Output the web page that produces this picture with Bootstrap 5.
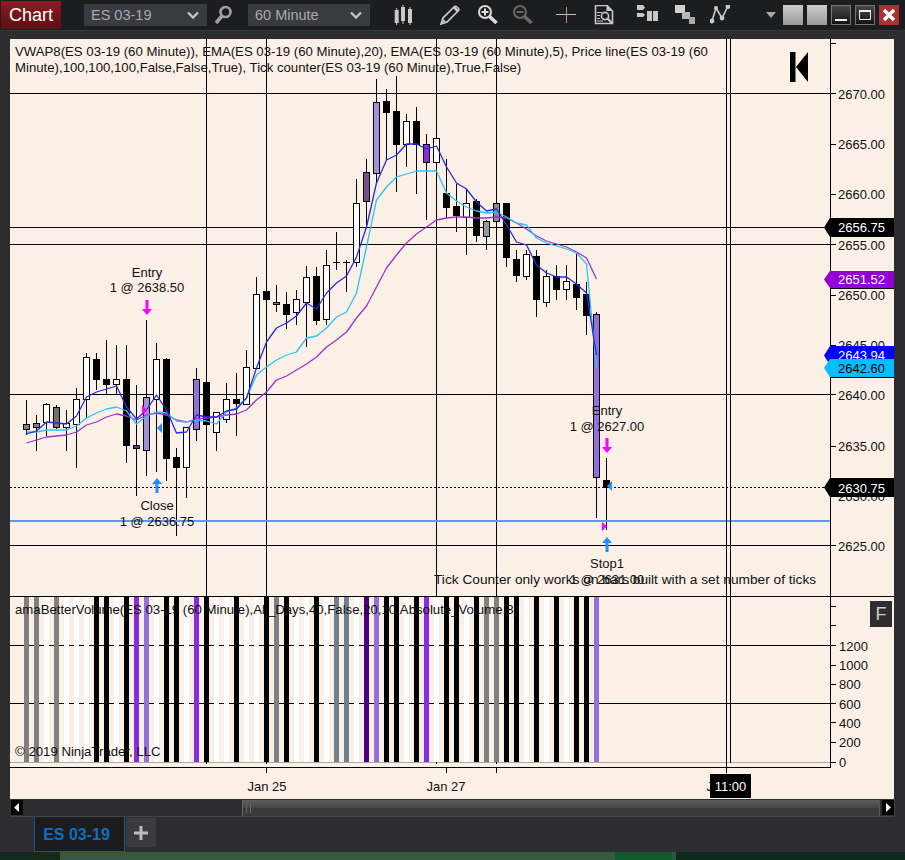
<!DOCTYPE html>
<html lang="en">
<head>
<meta charset="utf-8">
<title>Chart</title>
<link href="https://cdn.jsdelivr.net/npm/bootstrap@5.3.0/dist/css/bootstrap.min.css" rel="stylesheet">
<style>
html,body{margin:0;height:860px;overflow:hidden;background:#2d2d30;font-family:"Liberation Sans",Arial,sans-serif}
.win{width:905px;height:860px}
.tbar{height:30px;background:#1c1d1f;flex:none}
.tbar svg{display:block;flex:none}
.chart-btn{width:60px;height:28px;margin-left:1px;padding:0;border:0;border-radius:0;color:#fff;font-size:18px;line-height:28px;background:linear-gradient(#8e1c22,#5c1014);text-align:center}
.chart-btn:hover{color:#fff;background:linear-gradient(#8e1c22,#5c1014)}
.sel{height:22px;padding:0 8px 0 7px;border:0;border-radius:0;background:#3a3b42;color:#a9a9ad;font-size:14.5px;line-height:22px}
.sel:hover{background:#3a3b42;color:#a9a9ad}
.sel1{width:123px}.sel2{width:122px}
.s4{margin-left:4px}.s6{margin-left:6px}.s14{margin-left:14px}.s15{margin-left:15px}.s16{margin-left:16px}.s18{margin-left:18px}.s22{margin-left:22px}.s23{margin-left:23px}.s24{margin-left:24px}.s26{margin-left:26px}.s35{margin-left:35px}
.band{height:9px;flex:none;background:#2d2d30;border-top:1px solid #37373a}
.plot-wrap{padding-left:10px;height:760px;flex:none}
#chart{display:block;width:884px;height:760px;background:#faf0e6}
#chart text{font-family:"Liberation Sans",Arial,sans-serif;font-size:13px;fill:#111}
#chart .lg{font-size:13.2px}
#chart .tk{font-size:13.7px}
.sbar{height:18px;flex:none;margin-left:10px;width:885px;background:#2e2e30;border-bottom:1px solid #444;border-right:1px solid #444;padding:1px 1px 0}
.sb-arrow{width:12px;height:15px;background:#000;flex:none}
.sb-gap{width:219px;flex:none}
.sb-thumb{width:638px;height:16px;flex:none;margin-right:2px;border-left:1px solid #666;border-right:1px solid #555;background:linear-gradient(#5d5d5d,#454545 50%,#3a3a3a 50%,#3a3a3a)}
.tabs{height:35px;flex:none;padding-left:34px}
.tab-on{width:91px;height:35px;padding:0 6px 0 0;border:1px solid #0b5a97;border-top:0;border-radius:0;background:#1c1c1e;color:#0f6fbd;font-weight:700;font-size:16px;line-height:33px}
.tab-on:hover{background:#1c1c1e;color:#0f6fbd}
.tab-add{width:30px;height:29px;margin-left:1px;margin-top:1px;background:#3a3a40}
.foot{height:8px;flex:none}
.g1{width:60px;background:#13291d}.g2{width:555px;background:#38573f}.g3{width:57px;background:#11592e}.g4{width:4px;background:#2a5a3c}.g5{flex:1;background:#0e2a1d}
</style>
</head>
<body>
<div class="win d-flex flex-column">
  <div class="tbar d-flex align-items-center">
    <button class="btn chart-btn" type="button">Chart</button>
    <button class="btn sel sel1 s23 d-flex justify-content-between align-items-center" type="button"><span>ES 03-19</span><svg width="12" height="8" viewBox="0 0 12 8"><path d="M1 1.5 6 6.5 11 1.5" fill="none" stroke="#c4c4c4" stroke-width="2.4"/></svg></button>
    <svg class="s6" width="20" height="20" viewBox="0 0 20 20"><circle cx="12.5" cy="7" r="5" fill="none" stroke="#a0a0a0" stroke-width="2.6"/><path d="M9 11 3 18" stroke="#a0a0a0" stroke-width="3.6"/></svg>
    <button class="btn sel sel2 s15 d-flex justify-content-between align-items-center" type="button"><span>60 Minute</span><svg width="12" height="8" viewBox="0 0 12 8"><path d="M1 1.5 6 6.5 11 1.5" fill="none" stroke="#c4c4c4" stroke-width="2.4"/></svg></button>
    <svg class="s24" width="20" height="20" viewBox="0 0 20 20"><g fill="#c8c8c8"><rect x="0.7" y="5" width="4" height="13"/><rect x="2.2" y="3" width="1" height="17"/><rect x="7" y="2" width="4" height="14"/><rect x="8.5" y="-1" width="1" height="20"/><rect x="14" y="4" width="4" height="14"/><rect x="15.5" y="2" width="1" height="18"/></g></svg>
    <svg class="s26" width="20" height="20" viewBox="0 0 20 20"><path d="M1 19 3 13 14 2Q15.5.8 17 2L18.4 3.4Q19.4 5 18 6L7 17Z" fill="#1c1d1f" stroke="#d2d2d2" stroke-width="1.6"/><path d="M13 3 17 7 18.5 5.5 15 1.5Z" fill="#d2d2d2"/><path d="M1 19 3 13.5 6.5 17Z" fill="#9fb6cf"/></svg>
    <svg class="s18" width="20" height="20" viewBox="0 0 20 20"><circle cx="7" cy="7" r="6" fill="none" stroke="#dcdcdc" stroke-width="2"/><path d="M7 3.5v7M3.5 7h7" stroke="#dcdcdc" stroke-width="2"/><path d="M11.5 11.5 18.5 18" stroke="#dcdcdc" stroke-width="3.6"/></svg>
    <svg class="s15" width="20" height="20" viewBox="0 0 20 20"><circle cx="7" cy="7" r="6" fill="none" stroke="#686868" stroke-width="2"/><path d="M3.5 7h7" stroke="#686868" stroke-width="2"/><path d="M11.5 11.5 18.5 18" stroke="#686868" stroke-width="3.6"/></svg>
    <svg class="s23" width="20" height="20" viewBox="0 0 20 20"><path d="M0 9.5h20" stroke="#c4c4c4"/><path d="M10.5 2v16" stroke="#c09060"/></svg>
    <svg class="s18" width="20" height="20" viewBox="0 0 20 20"><path d="M1.5.5H13L18.5 6V18.5H1.5Z" fill="none" stroke="#c8c8c8" stroke-width="1.6"/><path d="M12.5.5V6H18.5Z" fill="#c8c8c8"/><path d="M3 7.5h5M3 10.5h3M3 13.5h3M3 16h6" stroke="#c8c8c8"/><circle cx="11" cy="11" r="3.6" fill="#1c1d1f" stroke="#c8c8c8" stroke-width="1.6"/><path d="M13.5 13.5 18.5 18.5" stroke="#c8c8c8" stroke-width="2.2"/></svg>
    <svg class="s22" width="22" height="20" viewBox="0 0 22 20"><g fill="#c8c8c8"><path d="M1 0H7L9 2.5 7 5H1Z"/><path d="M1 8H7L9 10 7 12H1Z"/><rect x="11" y="6" width="5" height="10"/><rect x="17" y="6" width="5" height="10"/></g></svg>
    <svg class="s16" width="22" height="20" viewBox="0 0 22 20"><rect x="1" y="-1" width="10" height="9" fill="#d0d0d0"/><rect x="8" y="7" width="8" height="7" fill="#b8b8b8"/><rect x="15" y="12" width="6" height="7" fill="#a8a8a8"/></svg>
    <svg class="s14" width="20" height="20" viewBox="0 0 20 20"><path d="M2 16 6 3 12 13 18 1" fill="none" stroke="#c8c8c8" stroke-width="1.6"/><g fill="#c8c8c8"><circle cx="2" cy="16" r="2.4"/><circle cx="6" cy="3" r="2"/><circle cx="12" cy="13" r="2.4"/><circle cx="18" cy="1.5" r="2.4"/></g></svg>
    <svg class="s35" width="12" height="6" viewBox="0 0 12 6"><path d="M1 0H11L6 6Z" fill="#a8a8a8"/></svg>
    <svg class="s6" width="20" height="20" viewBox="0 0 20 20"><defs><linearGradient id="gg" x1="0" y1="0" x2="0" y2="1"><stop offset="0" stop-color="#cbcbcb"/><stop offset="1" stop-color="#999"/></linearGradient><linearGradient id="gd" x1="0" y1="0" x2="0" y2="1"><stop offset="0" stop-color="#4a4a4a"/><stop offset="1" stop-color="#111"/></linearGradient></defs><rect width="20" height="20" fill="url(#gg)"/></svg>
    <svg class="s4" width="20" height="20" viewBox="0 0 20 20"><rect width="20" height="20" fill="url(#gg)"/></svg>
    <svg class="s4" width="20" height="20" viewBox="0 0 20 20"><rect x=".5" y=".5" width="19" height="19" fill="url(#gd)" stroke="#777"/><rect x="4" y="14" width="12" height="2" fill="#eee"/></svg>
    <svg class="s4" width="20" height="20" viewBox="0 0 20 20"><rect x=".5" y=".5" width="19" height="19" fill="url(#gd)" stroke="#777"/><path d="M4.5 6.5h11v8h-11z" fill="none" stroke="#eee"/><rect x="4" y="5" width="12" height="2" fill="#eee"/></svg>
    <svg class="s4" width="20" height="20" viewBox="0 0 20 20"><rect width="20" height="20" fill="#ab3232"/><path d="M5 5 15 15M15 5 5 15" stroke="#fff" stroke-width="3.4"/></svg>
  </div>
  <div class="band"></div>
  <div class="plot-wrap"><svg id="chart" viewBox="10 39 884 760" shape-rendering="crispEdges"></svg></div>
  <div class="sbar d-flex">
    <div class="sb-arrow d-flex align-items-center justify-content-center"><svg width="6" height="9" viewBox="0 0 6 9"><path d="M5 0V9L0 4.5Z" fill="#fff"/></svg></div>
    <div class="sb-gap"></div>
    <div class="sb-thumb d-flex align-items-center"><svg width="10" height="10" viewBox="0 0 10 10"><path d="M3.5 0v10M7.5 0v10" stroke="#666"/></svg></div>
    <div class="sb-arrow d-flex align-items-center justify-content-center"><svg width="6" height="9" viewBox="0 0 6 9"><path d="M1 0V9L6 4.5Z" fill="#fff"/></svg></div>
  </div>
  <div class="tabs d-flex align-items-start">
    <button class="btn tab-on" type="button">ES 03-19</button>
    <div class="tab-add d-flex align-items-center justify-content-center"><svg width="14" height="14" viewBox="0 0 14 14"><path d="M7 0v14M0 7h14" stroke="#bdbdbd" stroke-width="3"/></svg></div>
  </div>
  <div class="foot d-flex"><div class="g1"></div><div class="g2"></div><div class="g3"></div><div class="g4"></div><div class="g5"></div></div>
</div>
<script>
var W='#fff',K='#000',G='#808080',G2='#707070',G3='#999',L='#a291d6',P='#9370db',V='#8a2be2',D='#74508f';
var C=[
[400,435,424,429,G],[415,451,423,427,G],[403,436,404,422,W],[405,429,407,427,G2],[410,451,423,427,W],
[388,468,399,424,W],[353,418,357,399,W],[353,390,359,379,K],[340,394,379,384,K],[345,394,379,384,W],
[345,463,379,445,K],[385,496,445,448,'#6a2fa0'],[320,476,397,450,L],[343,472,359,399,W],[358,481,359,458,K],
[448,536,457,467,K],[427,498,427,467,W],[368,441,379,429,P],[382,461,382,424,K],[412,451,412,432,W],
[383,423,399,419,W],[373,436,399,403,K],[350,404,367,404,W],[277,368,294,368,W],[291,299,291,299,K],
[285,312,302,304,G],[292,329,304,314,K],[290,325,299,312,W],[266,347,277,302,W],[267,325,276,320,K],
[250,325,265,319,W],[232,270,262,262,K],[260,292,262,262,K],[179,267,203,262,W],[159,227,172,201,D],
[79,183,102,173,L],[89,160,101,112,K],[76,192,111,144,K],[114,167,121,144,W],[107,194,121,144,K],
[134,220,144,162,V],[136,220,138,162,W],[159,218,193,207,K],[184,232,206,215,K],[189,255,203,217,W],
[199,242,201,235,K],[220,250,221,236,G3],[203,221,203,221,'#8a8a8a'],[203,267,203,257,K],[250,282,259,275,K],
[250,280,254,276,W],[250,317,256,299,K],[270,307,276,302,W],[265,300,276,289,K],[265,300,281,289,W],
[253,310,284,297,K],[282,335,294,315,K],[312,518,314,477,P],[458,530,480,487,K]];
var volC=[G,G,W,G,W,W,W,K,K,W,K,V,P,W,K,K,W,V,K,W,W,K,W,W,K,G,K,W,W,K,W,'#708090','#708090',W,'#4b0082',P,K,K,W,K,V,W,K,K,W,K,G,G,K,K,W,K,W,K,W,K,K,P];
var blue=[434,431,422,423,424,416,397,392,389,386,407,419,410,395,410,433,432,415,417,417,411,409,398,368,342,328,323,316,303,309,293,283,276,257,227,183,160,155,144,144,149,146,167,183,189,202,211,209,225,242,245,265,273,277,277,284,293,355];
var cyan=[432,432,430,430,430,426,418,413,409,407,411,424,416,412,413,421,422,420,421,424,412,408,398,375,367,360,355,352,338,336,328,317,312,293,247,200,187,177,174,171,171,171,193,201,207,211,213,212,217,223,225,238,243,246,249,253,264,368];
var purp=[443,440,437,436,435,432,425,422,417,414,416,420,415,413,415,420,422,419,418,417,415,414,410,400,392,380,376,370,364,357,347,340,332,318,306,287,268,255,243,234,227,220,218,217,217,218,218,217,218,223,229,236,241,244,247,252,258,279];
var s='';
function X(i){return 26.5+10*i}
function line(a,b,c,d,col,w,extra){return '<line x1="'+a+'" y1="'+b+'" x2="'+c+'" y2="'+d+'" stroke="'+col+'" stroke-width="'+(w||1)+'" '+(extra||'')+'/>'}
function text(x,y,t,o){return '<text x="'+x+'" y="'+y+'" '+(o||'')+'>'+t+'</text>'}
function poly(a,col,w){var p=a.map(function(y,i){return X(i)+','+y}).join(' ');return '<polyline points="'+p+'" fill="none" stroke="'+col+'" stroke-width="'+w+'" stroke-linejoin="round" shape-rendering="geometricPrecision"/>'}
function tag(y1,y2,f,tx,ty,tc,b){var m=(y1+y2)/2;return '<polygon points="824,'+m+' 830,'+y1+' 894,'+y1+' 894,'+y2+' 830,'+y2+'" fill="'+f+'" shape-rendering="geometricPrecision"/>'+(b?line(830,y2+.5,894,y2+.5,'#000'):'')+text(838,ty,tx,'style="fill:'+tc+'"')}
function arrow(x,y,dir,col){
  var d=dir>0?'M'+(x-1.5)+' '+y+'h3v9h3.5l-5 6-5-6h3.5z':'M'+(x-1.5)+' '+(y+15)+'h3v-9h3.5l-5-6-5 6h3.5z';
  return '<path d="'+d+'" fill="'+col+'" shape-rendering="geometricPrecision"/>'}
[93.5,244.5,394.5,545.5].forEach(function(y){s+=line(10,y,830,y,'#000')});
s+=line(10,227.5,824,227.5,'#000');
[206.5,266.5,436.5,496.5].forEach(function(x){s+=line(x,39,x,596,'#000')});
C.forEach(function(c,i){var x=X(i);
  s+=line(x,c[0],x,c[1],'#000');
  if(c[2]===c[3]&&c[2]===262){s+=line(x-3.5,262.5,x+3.5,262.5,'#000')}
  else s+='<rect x="'+(x-3)+'" y="'+(c[2]+.5)+'" width="6" height="'+(c[3]-c[2])+'" fill="'+c[4]+'" stroke="#000"/>';
});
s+=line(10,487.5,824,487.5,'#000',1,'stroke-dasharray="2 2"');
s+=line(10,521,830,521,'#6495ed',2);
s+=poly(purp,'#a030d0',1.3)+poly(cyan,'#2fc0fa',1.3)+poly(blue,'#2a2ae6',1.3);
s+=arrow(147,300,1,'#ff00ff')+arrow(157,478,-1,'#1e90ff')+arrow(607,438,1,'#ff00ff')+arrow(607,537,-1,'#1e90ff');
s+='<g shape-rendering="geometricPrecision"><path d="M142 405l5 5-5 5z" fill="#ff00ff"/><path d="M162 423l-5 5 5 5z" fill="#1e90ff"/><path d="M612 481l-5 5 5 5z" fill="#1e90ff"/><path d="M602 522l5 4.500-5 4.500z" fill="#ff00ff"/></g>';
s+='<g shape-rendering="geometricPrecision"><rect x="790" y="52" width="5.500" height="30" fill="#000"/><path d="M808 52V82L796 67Z" fill="#000"/></g>';
s+=line(10,596.5,894,596.5,'#000');
s+=line(10,645.5,830,645.5,'#000')+line(10,703.5,830,703.5,'#000')+line(10,762,830,762,'#aaa');
volC.forEach(function(c,i){s+='<rect x="'+(24+10*i)+'" y="597" width="5" height="165" fill="'+c+'"/>'});
s+=line(726.5,39,726.5,773,'#000')+line(730.5,39,730.5,763,'#000');
s+=line(830.5,39,830.5,768,'#000')+line(10,767.5,831,767.5,'#000');
[43,93,144,194,244,295,345,394,446,496,545].forEach(function(y){s+=line(830,y+.5,836,y+.5,'#000')});
[606,625,645,665,684,703,722,742,762].forEach(function(y){s+=line(830,y+.5,836,y+.5,'#000')});
[266.5,446.5,496.5].forEach(function(x){s+=line(x,767,x,773,'#000')});
[206.5,266.5,436.5,496.5].forEach(function(x){s+=line(x,762,x,764,'#000')});
[['2670.00',99],['2665.00',149],['2660.00',199],['2655.00',250],['2650.00',300],['2645.00',350],['2640.00',400],['2635.00',451],['2630.00',501],['2625.00',551]].forEach(function(l){s+=text(838,l[1],l[0])});
[['1200',651],['1000',670],['800',689],['600',709],['400',728],['200',747],['0',767]].forEach(function(l){s+=text(839,l[1],l[0])});
s+=tag(218,237,'#000','2656.75',232,'#fff')+tag(271,288,'#9400d3','2651.52',284,'#fff',1)+tag(346,365,'#0000ff','2643.94',360,'#fff')+tag(359,377,'#00bfff','2642.60',373,'#000',1)+tag(478,497,'#000','2630.75',493,'#fff');
s+='<g shape-rendering="auto">';
s+=text(15,56,'VWAP8(ES 03-19 (60 Minute)), EMA(ES 03-19 (60 Minute),20), EMA(ES 03-19 (60 Minute),5), Price line(ES 03-19 (60','class="lg"');
s+=text(15,72,'Minute),100,100,100,False,False,True), Tick counter(ES 03-19 (60 Minute),True,False)','class="lg"');
s+=text(15,614,'amaBetterVolume(ES 03-19 (60 Minute),All_Days,40,False,20,10,Absolute_Volume,8)','class="lg"');
s+=text(15,756,'© 2019 NinjaTrader, LLC','class="lg"');
var mid='text-anchor="middle"';
s+=text(147,277,'Entry',mid)+text(147,292,'1 @ 2638.50',mid);
s+=text(157,510,'Close',mid)+text(157,526,'1 @ 2636.75',mid);
s+=text(607,415,'Entry',mid)+text(607,431,'1 @ 2627.00',mid);
s+=text(607,568,'Stop1',mid)+text(607,584,'1 @ 2631.00',mid);
s+=text(434,584,'Tick Counter only works on bars built with a set number of ticks','class="tk"');
s+=text(267,791,'Jan 25',mid)+text(446,791,'Jan 27',mid)+text(726,791,'Jan 29',mid);
s+='</g>';
s+='<rect x="710" y="774" width="41" height="24" fill="#000"/>'+text(730.5,791,'11:00',mid+' style="fill:#fff" shape-rendering="auto"');
s+='<rect x="870" y="601" width="22" height="26" fill="#2e2e30"/>'+'<text x="881" y="620" text-anchor="middle" style="font-size:18px;fill:#c8d0d8">F</text>';
document.getElementById('chart').innerHTML=s;
</script>
<script src="https://cdn.jsdelivr.net/npm/bootstrap@5.3.0/dist/js/bootstrap.bundle.min.js"></script>
</body>
</html>
